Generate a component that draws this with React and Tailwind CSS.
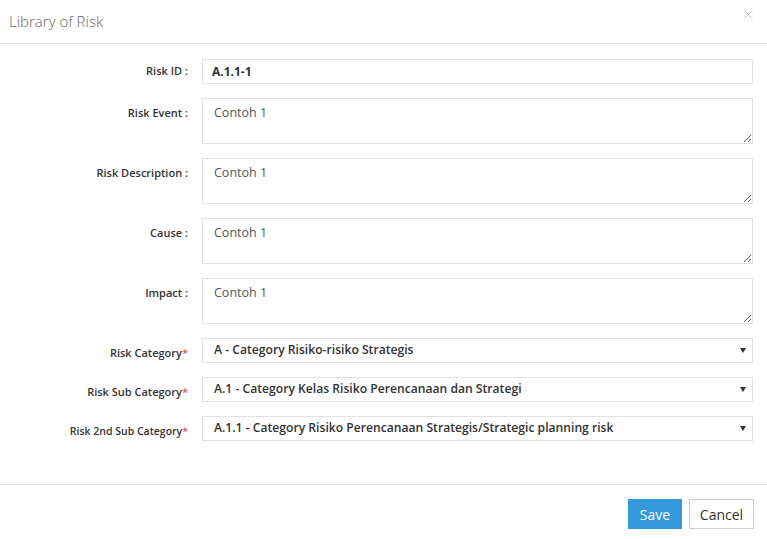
import React from "react";

const font = { fontFamily: '"Open Sans", "Liberation Sans", sans-serif' };

function Label({ children, req, small }) {
  return (
    <div
      className={`w-[188px] shrink-0 text-right font-semibold text-[#333] ${
        small ? "text-[10.5px]" : "text-[11px]"
      }`}
    >
      {children}
      {req && <span className="text-[#e7505a]">*</span>}
    </div>
  );
}

function TextRow({ label, value }) {
  return (
    <div className="flex gap-[14px] pr-[14px]">
      <div className="pt-[7px]">
        <Label>{label}</Label>
      </div>
      <textarea
        defaultValue={value}
        className="block h-[46px] flex-1 border border-[#e2e2e2] bg-white px-[11px] py-[5px] text-[12.5px] leading-[18px] text-[#555] outline-none"
        style={font}
      />
    </div>
  );
}

function SelectRow({ label, value, small }) {
  return (
    <div className="flex h-[25px] items-center gap-[14px] pr-[14px]">
      <div className="pt-[6px]">
        <Label req small={small}>
          {label}
        </Label>
      </div>
      <div className="relative h-[25px] flex-1">
        <select
          defaultValue={value}
          className="block h-[25px] w-full appearance-none border border-[#e2e2e2] bg-white pl-[11px] pr-[24px] text-[12.15px] font-semibold text-[#333] outline-none"
          style={font}
        >
          <option value={value}>{value}</option>
        </select>
        <span className="pointer-events-none absolute right-[7px] top-[10px] h-0 w-0 border-x-[3px] border-t-[5px] border-x-transparent border-t-[#333]" />
      </div>
    </div>
  );
}

export default function App() {
  return (
    <div className="h-[539px] w-[767px] bg-white" style={font}>
      <div className="flex h-[44px] items-center justify-between border-b border-[#e5e5e5] pl-[9px] pr-[14px]">
        <div className="text-[15px] font-light text-[#666]">Library of Risk</div>
        <svg width="9" height="9" viewBox="0 0 9 9" className="-mt-[15px]">
          <path d="M0.5 0.5 L8.5 8.5 M8.5 0.5 L0.5 8.5" stroke="#c8c8c8" strokeWidth="1" />
        </svg>
      </div>
      <div className="flex flex-col gap-[14px] border-b border-[#e5e5e5] pb-[43px] pt-[15px]">
        <div className="flex h-[25px] items-center gap-[14px] pr-[14px]">
          <Label>Risk ID :</Label>
          <input
            defaultValue="A.1.1-1"
            className="block h-[25px] flex-1 border border-[#e2e2e2] bg-white px-[9px] text-[12px] font-bold text-[#333] outline-none"
            style={font}
          />
        </div>
        <TextRow label="Risk Event :" value="Contoh 1" />
        <TextRow label="Risk Description :" value="Contoh 1" />
        <TextRow label="Cause :" value="Contoh 1" />
        <TextRow label="Impact :" value="Contoh 1" />
        <SelectRow label="Risk Category" value="A - Category Risiko-risiko Strategis" />
        <SelectRow label="Risk Sub Category" value="A.1 - Category Kelas Risiko Perencanaan dan Strategi" />
        <SelectRow
          small
          label="Risk 2nd Sub Category"
          value="A.1.1 - Category Risiko Perencanaan Strategis/Strategic planning risk"
        />
      </div>
      <div className="flex justify-end gap-[7px] pr-[13px] pt-[14px]">
        <button className="h-[30px] w-[54px] bg-[#3598dc] text-[14px] text-white" style={font}>
          Save
        </button>
        <button
          className="h-[30px] w-[65px] border border-[#ccc] bg-white text-[14px] text-[#333]"
          style={font}
        >
          Cancel
        </button>
      </div>
    </div>
  );
}
